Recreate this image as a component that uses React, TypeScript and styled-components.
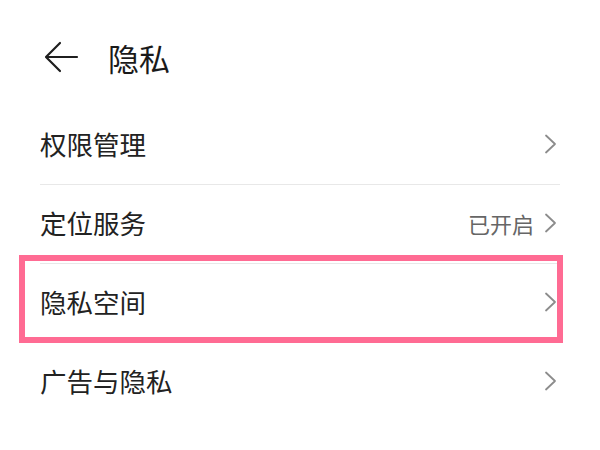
import React from 'react';
import styled, { createGlobalStyle } from 'styled-components';

const GlobalStyle = createGlobalStyle`
  html, body {
    margin: 0;
    padding: 0;
    background: #ffffff;
  }
  body {
    font-family: "Noto Sans CJK SC", "Noto Sans", sans-serif;
    color: #1a1a1a;
  }
`;

interface item {
  label: string;
  value?: string;
  highlighted?: boolean;
}

const items: item[] = [
  { label: '权限管理' },
  { label: '定位服务', value: '已开启' },
  { label: '隐私空间', highlighted: true },
  { label: '广告与隐私' },
];

const BackArrow = () => (
  <svg width="36" height="36" viewBox="0 0 36 36" fill="none">
    <path
      d="M34 18H4M17 4L3 18l14 14"
      stroke="#1f1f1f"
      strokeWidth="2.2"
      strokeLinecap="round"
      strokeLinejoin="round"
    />
  </svg>
);

const Chevron = () => (
  <svg width="14" height="20" viewBox="0 0 14 20" fill="none">
    <path
      d="M2 1.5l9 8.5-9 8.5"
      stroke="#8c8c8c"
      strokeWidth="1.8"
      strokeLinecap="round"
      strokeLinejoin="round"
    />
  </svg>
);

const App: React.FC = (): JSX.Element => {
  return (
    <Page>
      <GlobalStyle />
      <Header>
        <BackButton>
          <BackArrow />
        </BackButton>
        <Title>隐私</Title>
      </Header>
      <List>
        {items.map((it, i) => (
          <Row key={it.label} last={i === items.length - 1}>
            <Label>{it.label}</Label>
            <Right>
              {it.value && <Value>{it.value}</Value>}
              <Chevron />
            </Right>
            {it.highlighted && <Highlight />}
          </Row>
        ))}
      </List>
    </Page>
  );
};
export default App;

const Page = styled.div`
  width: 600px;
  height: 450px;
  overflow: hidden;
  background: #ffffff;
  padding: 0 40px;
  box-sizing: border-box;
`;

const Header = styled.div`
  height: 106px;
  display: flex;
  align-items: center;
  padding-top: 8px;
  box-sizing: border-box;
`;

const BackButton = styled.div`
  width: 36px;
  height: 36px;
  margin-left: 3px;
  display: flex;
  align-items: center;
`;

const Title = styled.h1`
  margin: 0 0 0 29px;
  font-size: 31px;
  font-weight: 400;
  color: #1a1a1a;
  line-height: 1;
`;

const List = styled.div`
  display: flex;
  flex-direction: column;
`;

const Row = styled.div<{ last?: boolean }>`
  position: relative;
  height: 79px;
  display: flex;
  align-items: center;
  justify-content: space-between;
  border-bottom: 1px solid ${p => (p.last ? 'transparent' : '#e8e8e8')};
  padding-bottom: 2px;
  box-sizing: border-box;
`;

const Label = styled.span`
  font-size: 26.5px;
  font-weight: 400;
  color: #222222;
  line-height: 1;
`;

const Right = styled.div`
  display: flex;
  align-items: center;
  gap: 10px;
  margin-right: 2px;
`;

const Value = styled.span`
  font-size: 22px;
  color: #666666;
  line-height: 1;
`;

const Highlight = styled.div`
  position: absolute;
  left: -21px;
  right: -3px;
  top: -9px;
  bottom: -1px;
  border: 6px solid #ff6b93;
  pointer-events: none;
`;
